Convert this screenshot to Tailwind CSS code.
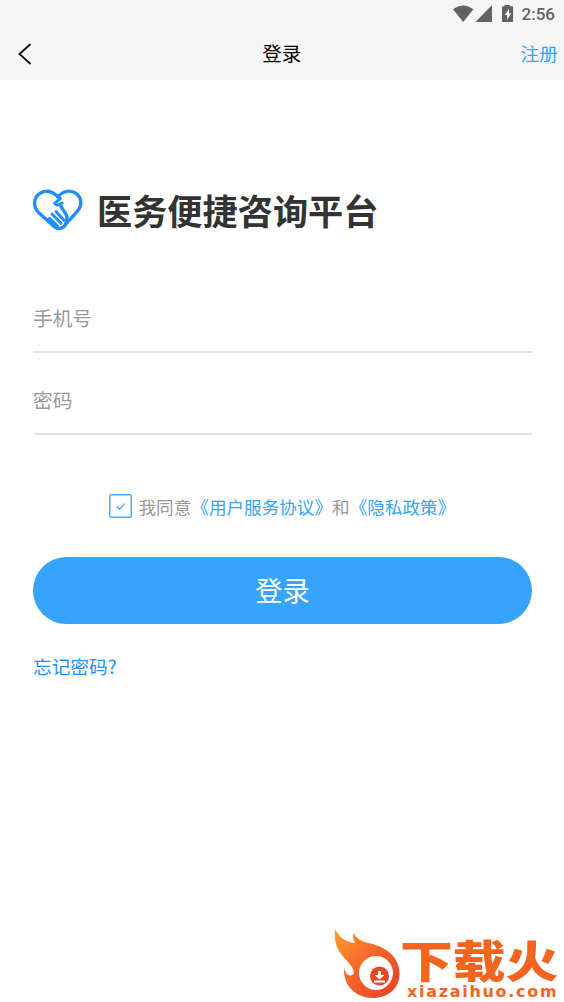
<!DOCTYPE html>
<html lang="zh-CN">
<head>
<meta charset="utf-8">
<title>登录</title>
<script src="https://cdn.jsdelivr.net/npm/@tailwindcss/browser@4"></script>
</head>
<body class="bg-white">
<div class="relative flex h-[1002px] w-[564px] flex-col overflow-hidden bg-white font-['Noto_Sans_CJK_SC',sans-serif]">
  <header class="h-20 bg-[#f6f6f6]">
    <div class="flex h-7 items-center justify-end pr-[9px]">
      <svg class="h-7 w-[64px] overflow-visible" viewBox="0 0 64 28" fill="#636363">
        <path d="M-1 9.300Q9.200 1.500 19.400 9.300L9.200 22Z"/>
        <path d="M38 5v17H21.500Z"/>
        <path fill-rule="evenodd" d="M50.500 5h5.500v1.300h2.300q.8 0 .8.800v14.100q0 .8-.8.800h-9.500q-.8 0-.8-.8V7.100q0-.8.800-.8h1.700ZM55 8.800l-4.200 6.300h2.400v4.800l4-6.600H55Z"/>
      </svg>
      <span class="ml-[4px] font-[Roboto] text-[17px] font-medium leading-[27px] text-[#636363]">2:56</span>
    </div>
    <div class="flex h-[50px] items-center justify-between pr-[6px] pl-[18px]">
      <svg class="mt-[2px] mr-[11px] h-[22px] w-[14px]" viewBox="0 0 14 22" fill="none" stroke="#111" stroke-width="1.800" stroke-linecap="round"><path d="M12 1.500L1.500 11L12 20.500"/></svg>
      <h1 class="text-center text-[19.500px] leading-[50px] text-black">登录</h1>
      <a class="text-right text-[18.700px] leading-[50px] text-[#36a3fc]">注册</a>
    </div>
  </header>
  <main class="flex flex-col pr-8 pl-[33px]">
    <div class="mt-[104px] flex h-[52px] items-center">
      <svg class="h-[42px] w-[50px] overflow-visible" viewBox="0 0 50 42" fill="none" stroke="#1e8ffa" stroke-width="3.300" stroke-linecap="round" stroke-linejoin="round">
        <path d="M17 33.700L5.500 23.500C-.5 17 .5 8 7.500 4C14 .4 20 3 24.700 7.700C30 2.500 36 .5 42 3.700C49 7.700 49.700 16.700 44 22.700L32.500 35.500"/>
        <path stroke-width="2.800" d="M24.700 7.700L27.500 9.500L21.500 14.300L24.300 16.300L29.300 14"/>
        <path d="M27.500 16C28.200 20.500 33.700 23 34 28.500C34.200 34.500 31.500 39.600 25.500 39.600C22.500 39.600 20 37 17 33.700"/>
        <path stroke-width="2.900" d="M16.500 29.200L24.500 37M19 25L28 34.200M23 22.500L31 31.300"/>
      </svg>
      <h2 class="ml-[14px] text-[35.200px] font-bold leading-[52px] text-[#333]">医务便捷咨询平台</h2>
    </div>
    <div class="mt-[48px] flex h-[69px] items-center border-b-2 border-[#e4e4e4] text-[19.700px] text-[#999]">手机号</div>
    <div class="mt-[13px] flex h-[69px] items-center border-b-2 border-[#e4e4e4] text-[19.700px] text-[#999]">密码</div>
    <div class="mt-[56px] flex h-[30px] items-center pl-[76px]">
      <svg class="h-6 w-[23px] shrink-0" viewBox="0 0 23 24" fill="none" stroke="#4aadfc"><rect x=".75" y=".75" width="21.500" height="22.500" rx="1.500" stroke-width="1.500"/><path stroke-width="1.300" d="M7.500 12.300l3 3L16 9.400"/></svg>
      <p class="ml-[6.500px] whitespace-nowrap text-[17.600px] leading-[31px] text-[#999]">我同意<a class="text-[#36a3fc]">《用户服务协议》</a>和<a class="text-[#36a3fc]">《隐私政策》</a></p>
    </div>
    <button class="mt-[35.600px] h-[67px] w-full rounded-full bg-[#36a3fc] pb-[2px] text-[27.300px] leading-[65px] text-white">登录</button>
    <a class="mt-[27.400px] text-[18.700px] leading-[30px] text-[#1e90ff]">忘记密码?</a>
  </main>
  <div class="absolute top-[928px] left-[333px] flex">
    <svg class="h-[72px] w-[68px] shrink-0" viewBox="0 0 68 72">
      <defs><linearGradient id="fire" x1="0" y1="0" x2="1" y2="1"><stop offset="0" stop-color="#ff9e2d"/><stop offset=".5" stop-color="#f5642a"/><stop offset="1" stop-color="#e93c25"/></linearGradient></defs>
      <path fill="url(#fire)" d="M2 1C6 9 12 14 22 15Q19 9 20.500 5Q24 12 33 14.500C52 18 66.500 28 66.500 46C66.500 61 54 70 40 70C23 70 10 58 11 40Q13 48 18 47.500Q23 46 19 39C11 28 0 23 2 1Z"/>
      <circle cx="43" cy="45" r="17" fill="#fff"/><circle cx="46.500" cy="48" r="9.500" fill="#ee4426"/>
      <path fill="#fff" d="M45 43h3v4h3.500L46.500 51.500L41.500 47H45ZM41 52.500h11v2H41Z"/>
    </svg>
    <div class="flex w-[163px] flex-col text-[#f5641e]">
      <div class="-ml-px h-[56px] origin-left scale-x-[1.200] whitespace-nowrap text-[44px] font-black leading-[62px]">下载火</div>
      <div class="ml-[6px] h-4 whitespace-nowrap font-['DejaVu_Sans'] text-[16px] font-bold leading-4 tracking-[1.700px]">xiazaihuo.com</div>
    </div>
  </div>
</div>
</body>
</html>
